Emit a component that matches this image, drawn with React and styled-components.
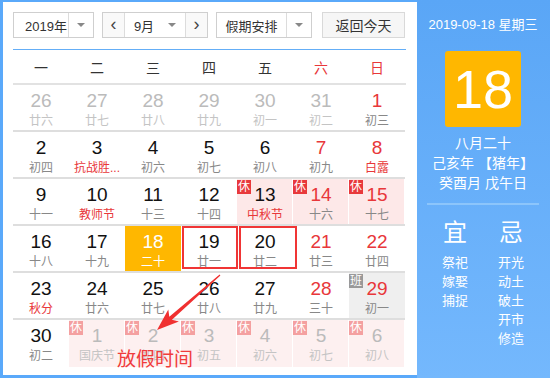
import styled, { createGlobalStyle, css } from 'styled-components';

const GlobalStyle = createGlobalStyle`
    body {
        margin: 0;
        font-family: 'Liberation Sans', 'Noto Sans CJK SC', sans-serif;
    }
`;

const RED = '#e8373a';

const Frame = styled.div`
    position: relative;
    display: flex;
    width: 550px;
    height: 378px;
    box-sizing: border-box;
    padding: 2px 0 3px 3px;
    background: #5aa9fa;
    overflow: hidden;
`;

const Main = styled.div`
    width: 414px;
    background: #fff;
    padding: 10px 11px 0 10px;
    box-sizing: border-box;
`;

const Toolbar = styled.div`
    display: flex;
    gap: 8px;
    height: 26px;
`;

const SelectBox = styled.div`
    display: flex;
    width: ${p => p.width}px;
    box-sizing: border-box;
    border: 1px solid #cfcfcf;
    background: #fff;
    color: #333;
    font-size: 13px;
`;

const SelectText = styled.div`
    flex: 1;
    display: flex;
    align-items: center;
    justify-content: ${p => (p.center ? 'center' : 'flex-start')};
    padding-left: ${p => (p.center ? 0 : 11)}px;
`;

const ArrowPart = styled.div`
    width: 24px;
    border-left: 1px solid #dcdcdc;
    display: flex;
    align-items: center;
    justify-content: center;

    &:after {
        content: '';
        border-left: 4px solid transparent;
        border-right: 4px solid transparent;
        border-top: 4px solid #888;
    }
`;

const StepButton = styled.div`
    width: 22px;
    display: flex;
    align-items: center;
    justify-content: center;
    border-${p => p.side}: 1px solid #dcdcdc;
    background: #f9f9f9;
    color: #444;
    font-size: 18px;
    line-height: 1;
    padding-bottom: 2px;
    box-sizing: border-box;
`;

const InlineArrow = styled.span`
    margin-left: 14px;
    border-left: 4px solid transparent;
    border-right: 4px solid transparent;
    border-top: 4px solid #888;
`;

const TodayButton = styled.div`
    width: 83px;
    box-sizing: border-box;
    border: 1px solid #d9d9d9;
    background: #f6f6f6;
    color: #333;
    font-size: 14px;
    display: flex;
    align-items: center;
    justify-content: center;
    margin-left: 2px;
`;

const BlueLine = styled.div`
    height: 1px;
    background: #64aef7;
    margin-top: 11px;
`;

const WeekHeader = styled.div`
    display: grid;
    grid-template-columns: repeat(7, 56px);
    height: 33px;
    align-items: center;
    border-bottom: 2px solid #e2e2e2;
`;

const WeekDay = styled.div`
    text-align: center;
    font-size: 14px;
    color: ${p => (p.weekend ? RED : '#333')};
`;

const Grid = styled.div`
    display: grid;
    grid-template-columns: repeat(7, 56px);
    grid-auto-rows: 47px;
`;

const Cell = styled.div`
    position: relative;
    display: flex;
    flex-direction: column;
    align-items: center;
    box-sizing: border-box;
    padding-top: 6px;
    border-bottom: ${p => (p.last ? 0 : '2px solid #dedede')};
    ${p => p.kind === 'rest' && css`
        background: #fde8e8;
        box-shadow: inset -1px 0 #fff;
    `}
    ${p => p.kind === 'restFaded' && css`
        background: #fdf0f0;
        box-shadow: inset -1px 0 #fff;
    `}
    ${p => p.kind === 'work' && css`
        background: #efefef;
    `}
    ${p => p.kind === 'today' && css`
        background: #ffb700;
    `}
`;

const DayNum = styled.div`
    font-size: 19px;
    line-height: 20px;
    color: ${p => p.color};
`;

const Lunar = styled.div`
    margin-top: 2px;
    font-size: 12px;
    line-height: 16px;
    white-space: nowrap;
    color: ${p => p.color};
`;

const Badge = styled.span`
    position: absolute;
    top: 1px;
    left: 0;
    width: 14px;
    height: 14px;
    line-height: 14px;
    font-size: 12px;
    text-align: center;
    color: #fff;
    background: ${p => p.bg};
`;

const Panel = styled.div`
    flex: 1;
    display: flex;
    flex-direction: column;
    align-items: center;
    padding: 16px 11px 0 10px;
    margin-top: -2px;
    margin-bottom: -3px;
    background: linear-gradient(#5aa6f6, #74b8fd);
    color: #fff;
`;

const DateLine = styled.div`
    font-size: 13px;
    line-height: 18px;
`;

const BigDay = styled.div`
    width: 76px;
    height: 76px;
    margin-top: 17px;
    border-radius: 3px;
    background: #ffb700;
    display: flex;
    align-items: center;
    justify-content: center;
    font-family: 'Liberation Sans', sans-serif;
    font-size: 54px;
`;

const LunarInfo = styled.div`
    margin-top: 6px;
    font-size: 14px;
    line-height: 20px;
    text-align: center;
`;

const PanelDivider = styled.div`
    align-self: stretch;
    height: 2px;
    margin-top: 10px;
    background: #8cc5fb;
`;

const Advice = styled.div`
    align-self: stretch;
    display: grid;
    grid-template-columns: 1fr 1fr;
    margin-top: 12px;
`;

const AdviceCol = styled.div`
    display: flex;
    flex-direction: column;
    align-items: center;
`;

const AdviceTitle = styled.div`
    font-size: 24px;
    line-height: 32px;
    margin-bottom: 4px;
`;

const AdviceItem = styled.div`
    font-size: 13px;
    line-height: 19px;
`;

const MarkBox = styled.div`
    position: absolute;
    top: 226px;
    left: ${p => p.left}px;
    width: ${p => p.width}px;
    height: 43px;
    box-sizing: border-box;
    border: 2px solid #f03535;
`;

const ArrowSvg = styled.svg`
    position: absolute;
    left: 150px;
    top: 270px;
`;

const Note = styled.div`
    position: absolute;
    left: 117px;
    top: 348px;
    font-size: 19px;
    line-height: 24px;
    color: #f03c3c;
`;

const weekDays = ['一', '二', '三', '四', '五', '六', '日'];

// kind: other | rest | restFaded | work | today
const days = [
    [26, '廿六', 'other'], [27, '廿七', 'other'], [28, '廿八', 'other'], [29, '廿九', 'other'],
    [30, '初一', 'other'], [31, '初二', 'other'], [1, '初三'],
    [2, '初四'], [3, '抗战胜...', null, true], [4, '初六'], [5, '初七'], [6, '初八'], [7, '初九'], [8, '白露', null, true],
    [9, '十一'], [10, '教师节', null, true], [11, '十三'], [12, '十四'], [13, '中秋节', 'rest', true], [14, '十六', 'rest'], [15, '十七', 'rest'],
    [16, '十八'], [17, '十九'], [18, '二十', 'today'], [19, '廿一'], [20, '廿二'], [21, '廿三'], [22, '廿四'],
    [23, '秋分', null, true], [24, '廿六'], [25, '廿七'], [26, '廿八'], [27, '廿九'], [28, '三十'], [29, '初一', 'work'],
    [30, '初二'], [1, '国庆节', 'restFaded'], [2, '初四', 'restFaded'], [3, '初五', 'restFaded'], [4, '初六', 'restFaded'], [5, '初七', 'restFaded'], [6, '初八', 'restFaded'],
];

const good = ['祭祀', '嫁娶', '捕捉'];
const bad = ['开光', '动土', '破土', '开市', '修造'];

const DayCell = ({ day, lunar, kind, festival, index }) => {
    const weekend = index % 7 >= 5;
    let numColor = weekend ? RED : '#111';
    let lunarColor = festival ? RED : '#888';
    if (kind === 'other' || kind === 'restFaded') {
        numColor = '#bbb';
        lunarColor = '#c4c4c4';
    }
    if (kind === 'today') {
        numColor = '#fff';
        lunarColor = '#fff';
    }
    return (
        <Cell kind={kind} last={index >= 35}>
            {kind === 'rest' && <Badge bg="#e8393b">休</Badge>}
            {kind === 'restFaded' && <Badge bg="#f4a0a0">休</Badge>}
            {kind === 'work' && <Badge bg="#999">班</Badge>}
            <DayNum color={numColor}>{day}</DayNum>
            <Lunar color={lunarColor}>{lunar}</Lunar>
        </Cell>
    );
};

export default function App() {
    return (
        <>
            <GlobalStyle />
            <Frame>
                <Main>
                    <Toolbar>
                        <SelectBox width={81}>
                            <SelectText>2019年</SelectText>
                            <ArrowPart />
                        </SelectBox>
                        <SelectBox width={106}>
                            <StepButton side="right">&lsaquo;</StepButton>
                            <SelectText center>9月<InlineArrow /></SelectText>
                            <StepButton side="left">&rsaquo;</StepButton>
                        </SelectBox>
                        <SelectBox width={96}>
                            <SelectText center>假期安排</SelectText>
                            <ArrowPart />
                        </SelectBox>
                        <TodayButton>返回今天</TodayButton>
                    </Toolbar>
                    <BlueLine />
                    <WeekHeader>
                        {weekDays.map((d, i) => (
                            <WeekDay key={d} weekend={i >= 5}>{d}</WeekDay>
                        ))}
                    </WeekHeader>
                    <Grid>
                        {days.map(([day, lunar, kind, festival], i) => (
                            <DayCell key={i} index={i} day={day} lunar={lunar} kind={kind} festival={festival} />
                        ))}
                    </Grid>
                </Main>
                <Panel>
                    <DateLine>2019-09-18 星期三</DateLine>
                    <BigDay>18</BigDay>
                    <LunarInfo>
                        八月二十<br />
                        己亥年 【猪年】<br />
                        癸酉月 戊午日
                    </LunarInfo>
                    <PanelDivider />
                    <Advice>
                        <AdviceCol>
                            <AdviceTitle>宜</AdviceTitle>
                            {good.map(t => <AdviceItem key={t}>{t}</AdviceItem>)}
                        </AdviceCol>
                        <AdviceCol>
                            <AdviceTitle>忌</AdviceTitle>
                            {bad.map(t => <AdviceItem key={t}>{t}</AdviceItem>)}
                        </AdviceCol>
                    </Advice>
                </Panel>

                <MarkBox left={182} width={56} />
                <MarkBox left={239} width={58} />
                <ArrowSvg width="80" height="66" viewBox="0 0 80 66">
                    <polygon
                        fill="#f03030"
                        points="70.4,5.5 21.9,49.7 28.9,51.5 7,60 18.3,39.5 19.3,46.7 69.6,4.5"
                    />
                </ArrowSvg>
                <Note>放假时间</Note>
            </Frame>
        </>
    );
}
